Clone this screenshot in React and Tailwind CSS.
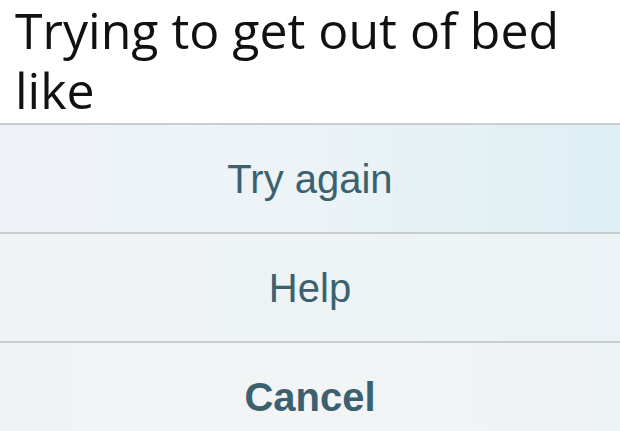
export default function App() {
  const actions = [
    { label: "Try again", bold: false, tint: "bg-gradient-to-r from-[#eef2f6] via-[#ecf3f6] to-[#ddeff3]" },
    { label: "Help", bold: false, tint: "bg-gradient-to-r from-[#eff3f6] via-[#eef3f5] to-[#ebf3f6]" },
    { label: "Cancel", bold: true, tint: "bg-gradient-to-r from-[#f0f3f5] via-[#f2f4f5] to-[#eef3f5]" },
  ];

  return (
    <div className="w-[620px] h-[431px] overflow-hidden bg-white">
      <div className="h-[123px]">
        <p className="pl-[15px] text-[50px] leading-[60px] text-[#111111] font-['Open_Sans',sans-serif]">
          Trying to get out of bed
          <br />
          like
        </p>
      </div>
      {actions.map((action) => (
        <div
          key={action.label}
          className={
            "h-[109px] border-t-2 border-[#c9cdcf] flex items-center justify-center " + action.tint
          }>
          <span
            className={
              "text-[40px] leading-none text-[#3b616f] font-['Liberation_Sans',Arial,sans-serif] " +
              (action.bold ? "font-bold" : "font-normal")
            }>
            {action.label}
          </span>
        </div>
      ))}
    </div>
  );
}
